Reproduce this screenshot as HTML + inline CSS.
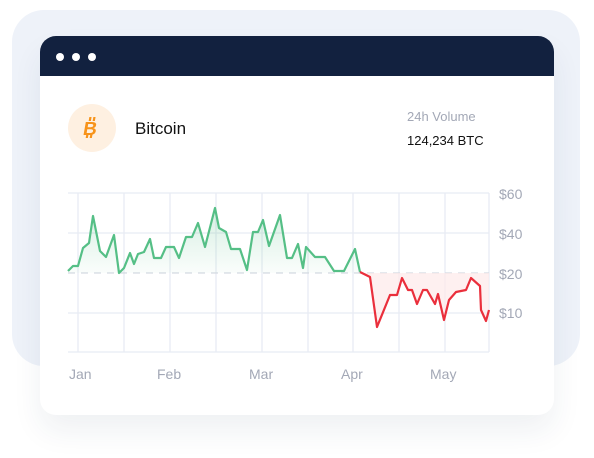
<!DOCTYPE html>
<html><head><style>
body{margin:0;width:594px;height:458px;background:#fff;position:relative;overflow:hidden;font-family:"Liberation Sans",sans-serif}
.bg{position:absolute;left:12px;top:10px;width:568px;height:356px;background:#eef2f9;border-radius:32px}
.card{position:absolute;left:40px;top:36px;width:514px;height:379px;background:#fff;border-radius:16px;box-shadow:0 16px 30px rgba(30,50,90,0.07);overflow:hidden}
.hdr{height:40px;background:#12213f}
.dot{position:absolute;top:17px;width:8px;height:8px;border-radius:50%;background:#fff}
.t{position:absolute;white-space:nowrap}
</style></head><body>
<div class="bg"></div>
<div class="card"><div class="hdr"></div>
<div class="dot" style="left:16px"></div><div class="dot" style="left:32px"></div><div class="dot" style="left:48px"></div>
</div>
<div style="position:absolute;left:68px;top:104px;width:48px;height:48px;border-radius:50%;background:#fef0e1"></div>
<svg style="position:absolute;left:80px;top:114px" width="24" height="28">
<g transform="skewX(-10) translate(3,0)">
<text x="3" y="21" font-family="Liberation Sans" font-weight="bold" font-size="19" fill="#f7931a">B</text>
<g stroke="#f7931a" stroke-width="2.2"><line x1="8" y1="3" x2="8" y2="7"/><line x1="12" y1="3" x2="12" y2="7"/><line x1="8" y1="20" x2="8" y2="24"/><line x1="12" y1="20" x2="12" y2="24"/></g>
</g></svg>
<div class="t" style="left:135px;top:119px;font-size:17px;color:#111">Bitcoin</div>
<div class="t" style="left:407px;top:109px;font-size:13px;color:#a3a8b6">24h Volume</div>
<div class="t" style="left:407px;top:133px;font-size:13px;color:#111">124,234 BTC</div>
<svg style="position:absolute;left:0;top:0" width="594" height="458">
<defs>
<linearGradient id="g" x1="0" y1="0" x2="0" y2="1"><stop offset="0" stop-color="#5bbf8a" stop-opacity="0.25"/><stop offset="1" stop-color="#5bbf8a" stop-opacity="0.03"/></linearGradient>
</defs>
<g stroke="#e8ecf3" stroke-width="1.3">
<line x1="68" y1="193" x2="489" y2="193"/><line x1="68" y1="233" x2="489" y2="233"/><line x1="68" y1="313" x2="489" y2="313"/><line x1="68" y1="352" x2="489" y2="352"/>
<line x1="78" y1="193" x2="78" y2="352"/><line x1="124" y1="193" x2="124" y2="352"/><line x1="170" y1="193" x2="170" y2="352"/><line x1="216" y1="193" x2="216" y2="352"/><line x1="262" y1="193" x2="262" y2="352"/><line x1="308" y1="193" x2="308" y2="352"/><line x1="353" y1="193" x2="353" y2="352"/><line x1="399" y1="193" x2="399" y2="352"/><line x1="445" y1="193" x2="445" y2="352"/><line x1="489" y1="193" x2="489" y2="352"/>
</g>
<line x1="68" y1="273" x2="489" y2="273" stroke="#d5d9e2" stroke-width="1.3" stroke-dasharray="7 6"/>
<polygon fill="url(#g)" points="68,271 73,266 78,266 83,248 89,243 93,216 100,251 106,257 114,235 119,273 124,268 130,253 134,264 138,254 144,252 150,239 154,258 161,258 166,247 174,247 179,258 186,237 192,237 198,223 205,247 215,208 219,228 226,232 231,249 240,249 247,270 253,232 258,232 263,220 269,246 280,215 287,258 292,258 298,244 303,268 306,247 315,257 325,257 334,271 344,271 355,249 360,273 68,273"/>
<polygon fill="#fdeaea" opacity="0.7" points="360,273 370,277 377,327 390,295 397,295 402,278 408,290 412,290 417,304 423,290 427,290 435,304 438,294 444,320 449,300 456,292 466,290 471,278 480,286 481,310 486,321 489,310 489,273"/>
<polyline fill="none" stroke="#55bf86" stroke-width="2.2" stroke-linejoin="round" points="68,271 73,266 78,266 83,248 89,243 93,216 100,251 106,257 114,235 119,273 124,268 130,253 134,264 138,254 144,252 150,239 154,258 161,258 166,247 174,247 179,258 186,237 192,237 198,223 205,247 215,208 219,228 226,232 231,249 240,249 247,270 253,232 258,232 263,220 269,246 280,215 287,258 292,258 298,244 303,268 306,247 315,257 325,257 334,271 344,271 355,249 360,272"/>
<polyline fill="none" stroke="#ea2f3c" stroke-width="2.2" stroke-linejoin="round" points="360,272 370,277 377,327 390,295 397,295 402,278 408,290 412,290 417,304 423,290 427,290 435,304 438,294 444,320 449,300 456,292 466,290 471,278 480,286 481,310 486,321 489,310"/>
<g font-family="Liberation Sans" font-size="14" fill="#a3a8b6">
<text x="499" y="199">$60</text><text x="499" y="239">$40</text><text x="499" y="279">$20</text><text x="499" y="318">$10</text>
<text x="69" y="379">Jan</text><text x="157" y="379">Feb</text><text x="249" y="379">Mar</text><text x="341" y="379">Apr</text><text x="430" y="379">May</text>
</g>
</svg>
</body></html>
